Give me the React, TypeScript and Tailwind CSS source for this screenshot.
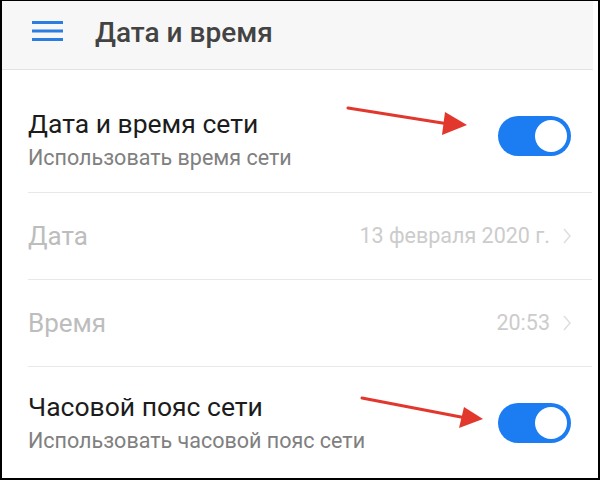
// Экран настроек «Дата и время» (Android)

function Toggle({ className = "" }: { className?: string }) {
    return (
        <div className={`w-[73px] h-[40px] rounded-full bg-[#1b7df1] flex items-center justify-end pr-[4px] shrink-0 ${className}`}>
            <div className="w-[32px] h-[32px] rounded-full bg-white" />
        </div>
    );
}

function Chevron() {
    return (
        <svg width="10" height="18" viewBox="0 0 10 18" className="ml-[12px]">
            <path d="M2 2 L8 9 L2 16" fill="none" stroke="#dedede" strokeWidth="1.5" />
        </svg>
    );
}

function Arrow({ className, tip, c1, c2, start }: {
    className: string;
    start: [number, number];
    tip: [number, number];
    c1: [number, number];
    c2: [number, number];
}) {
    const base: [number, number] = [(c1[0] + c2[0]) / 2, (c1[1] + c2[1]) / 2];
    return (
        <svg width="140" height="45" viewBox="0 0 140 45" className={`absolute ${className}`}>
            <line x1={start[0]} y1={start[1]} x2={base[0] + 2} y2={base[1]} stroke="#e2372d" strokeWidth="3" strokeLinecap="round" />
            <polygon points={`${tip[0]},${tip[1]} ${c1[0]},${c1[1]} ${c2[0]},${c2[1]}`} fill="#e2372d" />
        </svg>
    );
}

export default function App() {
    return (
        <div className="w-[600px] h-[480px] bg-white border-l-2 border-r-2 border-t border-b-2 border-black overflow-hidden font-['Roboto',sans-serif]">
            {/* шапка */}
            <div className="h-[69px] bg-[#f7f7f7] border-b border-[#e3e3e3] flex items-start mr-[5px]">
                <svg width="31" height="20" viewBox="0 0 31 20" className="ml-[30px] mt-[20px]">
                    <rect x="0" y="0" width="31" height="3" fill="#2a7de1" />
                    <rect x="0" y="8.5" width="31" height="3" fill="#2a7de1" />
                    <rect x="0" y="17" width="31" height="3" fill="#2a7de1" />
                </svg>
                <p className="ml-[32px] mt-[16px] text-[28px] leading-[32px] font-medium text-[#434343]">
                    Дата и время
                </p>
            </div>

            {/* Дата и время сети */}
            <div className="relative h-[123px] ml-[26px] mr-[6px] border-b border-[#e8e8e8] flex items-start justify-between pr-[21px]">
                <div className="pt-[39px]">
                    <p className="text-[26.5px] leading-[30px] text-[#1c1c1c]">Дата и время сети</p>
                    <p className="mt-[7px] text-[21.5px] leading-[24px] text-[#808080]">Использовать время сети</p>
                </div>
                <Toggle className="mt-[46px]" />
                <Arrow className="left-[312px] top-[30px]" start={[8, 8]} tip={[127, 25]} c1={[105, 12]} c2={[102, 35]} />
            </div>

            {/* Дата */}
            <div className="h-[87px] ml-[26px] mr-[6px] border-b border-[#e8e8e8] flex items-center justify-between pr-[20px]">
                <p className="text-[26px] leading-[30px] text-[#bdbdbd]">Дата</p>
                <div className="flex items-center">
                    <span className="text-[21.5px] leading-[26px] text-[#cccccc]">13 февраля 2020 г.</span>
                    <Chevron />
                </div>
            </div>

            {/* Время */}
            <div className="h-[87px] ml-[26px] mr-[6px] border-b border-[#e8e8e8] flex items-center justify-between pr-[20px]">
                <p className="text-[26px] leading-[30px] text-[#bdbdbd]">Время</p>
                <div className="flex items-center">
                    <span className="text-[21.5px] leading-[26px] text-[#cccccc]">20:53</span>
                    <Chevron />
                </div>
            </div>

            {/* Часовой пояс сети */}
            <div className="relative h-[110px] ml-[26px] mr-[6px] flex items-start justify-between pr-[21px]">
                <div className="pt-[25px]">
                    <p className="text-[26.5px] leading-[30px] text-[#1c1c1c]">Часовой пояс сети</p>
                    <p className="mt-[7px] text-[21.5px] leading-[24px] text-[#808080]">Использовать часовой пояс сети</p>
                </div>
                <Toggle className="mt-[36px]" />
                <Arrow className="left-[326px] top-[23px]" start={[8, 8]} tip={[129, 29]} c1={[110, 17]} c2={[105, 38]} />
            </div>
        </div>
    );
}
